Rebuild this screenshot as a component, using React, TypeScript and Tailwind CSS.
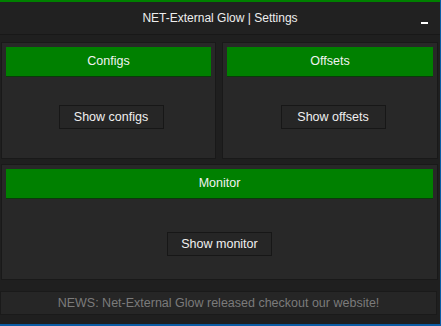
import React from 'react';

const font = { fontFamily: '"Liberation Sans", Arial, sans-serif' };

const Panel = ({ title, action, className, gap }: { title: string; action: string; className?: string; gap: string }) => (
  <div className={`bg-[#282828] border border-[#191919] p-[4px] flex flex-col items-center ${className ?? ''}`}>
    <div className="w-full h-[30px] bg-[#008000] border-b border-[#0a3a0a] flex items-center justify-center text-[#f2f2f2] text-[12.5px]">
      {title}
    </div>
    <button
      className={`${gap} w-[105px] h-[24px] bg-[#262626] border border-[#171717] text-[#f0f0f0] text-[12.5px] flex items-center justify-center`}
    >
      {action}
    </button>
  </div>
);

export default function App() {
  return (
    <div className="w-[441px] h-[326px] bg-[#0b5ca5] overflow-hidden" style={font}>
      <div className="w-[440px] h-[324px] bg-[#1f1f1f] border-t-2 border-[#008000] flex flex-col">
        <div className="h-[33px] shrink-0 flex items-center justify-center relative border-b border-[#181818] bg-[#212121]">
          <span className="text-[#eeeeee] text-[12px]">NET-External Glow | Settings</span>
          <span className="absolute right-[12px] top-[20px] w-[7px] h-[2px] bg-white" />
        </div>

        <div className="pl-[1px] pr-[2px] pt-[7px] flex flex-col">
          <div className="grid grid-cols-[215px_216px] gap-[6px] h-[117px]">
            <Panel title="Configs" action="Show configs" gap="mt-[28px] ml-[5px]" />
            <Panel title="Offsets" action="Show offsets" gap="mt-[28px] ml-[6px]" />
          </div>
          <Panel title="Monitor" action="Show monitor" gap="mt-[33px]" className="mt-[5px] h-[116px]" />
        </div>

        <div className="mt-[11px] mr-[3px] h-[24px] bg-[#262626] border border-[#1a1a1a] flex items-center justify-center text-[#7b7b7b] text-[12.5px]">
          NEWS: Net-External Glow released checkout our website!
        </div>
      </div>
    </div>
  );
}
